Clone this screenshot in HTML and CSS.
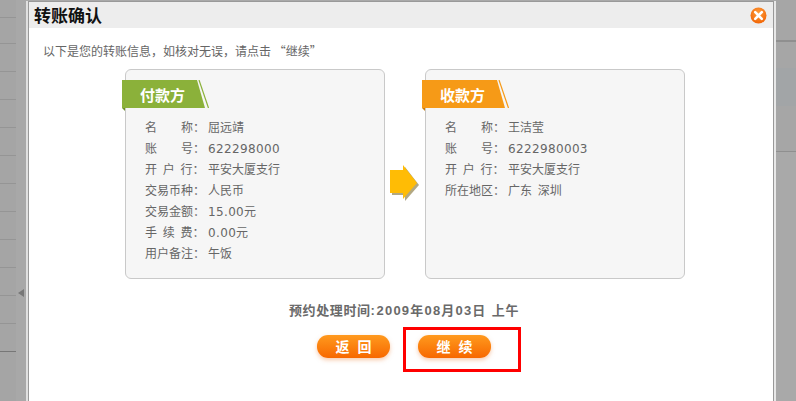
FILE: index.html
```html
<!DOCTYPE html>
<html lang="zh-CN">
<head>
<meta charset="utf-8">
<title>转账确认</title>
<link rel="stylesheet" href="styles.css">
</head>
<body>
<div class="page">
  <aside class="side-left">
    <div class="rows">
      <i class="r r1"></i><i class="r r2"></i><i class="r"></i><i class="r"></i><i class="r"></i><i class="r"></i><i class="r"></i><i class="r"></i><i class="r"></i><i class="r"></i><i class="r"></i><i class="r"></i><i class="r dark"></i>
    </div>
    <div class="strip"><span class="tri"></span></div>
  </aside>
  <main class="dialog">
    <header class="head">
      <h1>转账确认</h1>
      <svg class="close" width="17" height="17" viewBox="0 0 17 17" aria-label="关闭">
        <defs><radialGradient id="cg" cx="0.5" cy="0.35" r="0.7"><stop offset="0" stop-color="#ffa040"/><stop offset="1" stop-color="#f06000"/></radialGradient></defs>
        <circle cx="8.500" cy="8.500" r="8" fill="url(#cg)"/>
        <path d="M5.200 5.200 11.800 11.800M11.800 5.200 5.200 11.800" stroke="#fff" stroke-width="2.600" stroke-linecap="round"/>
      </svg>
    </header>
    <p class="intro">以下是您的转账信息，如核对无误，请点击 “继续”</p>
    <div class="cards">
      <section class="card">
        <div class="tag green"><span class="tag-body">付款方</span>
          <svg class="tag-tail" width="13" height="28" viewBox="0 0 13 28"><path d="M0 0 8 28H0Z" fill="currentColor"/><path d="M2 0 11.500 28" stroke="currentColor" stroke-width="1.200" fill="none"/></svg>
        </div>
        <ul class="info">
          <li><span class="k">名&emsp;&emsp;称：</span><span>屈远靖</span></li>
          <li><span class="k">账&emsp;&emsp;号：</span><span class="num">622298000</span></li>
          <li><span class="k">开 户 行：</span><span>平安大厦支行</span></li>
          <li><span class="k">交易币种：</span><span>人民币</span></li>
          <li><span class="k">交易金额：</span><span class="num">15.00元</span></li>
          <li><span class="k">手 续 费：</span><span class="num">0.00元</span></li>
          <li><span class="k">用户备注：</span><span>午饭</span></li>
        </ul>
      </section>
      <svg class="arrow" width="30" height="38" viewBox="0 0 30 38">
        <defs><filter id="as" x="-20%" y="-20%" width="150%" height="150%"><feGaussianBlur stdDeviation="0.700"/></filter></defs>
        <path d="M2 7H15V2L29 20 15 36V30H2Z" fill="#8a7a40" opacity=".65" filter="url(#as)"/>
        <path d="M0 5H13V0L27 18 13 34V28H0Z" fill="#ffbc05"/>
      </svg>
      <section class="card">
        <div class="tag orange"><span class="tag-body">收款方</span>
          <svg class="tag-tail" width="13" height="28" viewBox="0 0 13 28"><path d="M0 0 8 28H0Z" fill="currentColor"/><path d="M2 0 11.500 28" stroke="currentColor" stroke-width="1.200" fill="none"/></svg>
        </div>
        <ul class="info">
          <li><span class="k">名&emsp;&emsp;称：</span><span>王洁莹</span></li>
          <li><span class="k">账&emsp;&emsp;号：</span><span class="num">6222980003</span></li>
          <li><span class="k">开 户 行：</span><span>平安大厦支行</span></li>
          <li><span class="k">所在地区：</span><span>广东 深圳</span></li>
        </ul>
      </section>
    </div>
    <p class="time">预约处理时间:<span class="date">2009年08月03日</span> 上午</p>
    <div class="actions">
      <button class="btn" type="button">返 回</button>
      <div class="highlight"><button class="btn" type="button">继 续</button></div>
    </div>
  </main>
  <aside class="side-right">
    <i class="rb rb1"></i><i class="rb rb2"></i><i class="rb rb3"></i><i class="rb rb4"></i><i class="rb rb5"></i>
  </aside>
</div>
</body>
</html>
```

FILE: styles.css
```css
* { box-sizing: border-box; }
html, body { margin: 0; height: 100%; }
body { background: #a9a9a9; overflow: hidden; font-family: "Noto Sans CJK SC", "Liberation Sans", sans-serif; }
.page { display: flex; width: 796px; height: 401px; }
.side-left { width: 26px; height: 401px; display: flex; flex-shrink: 0; background: #a8a8a8; }
.rows { width: 16px; display: flex; flex-direction: column; background: #a5a5a5; }
.r { display: block; height: 28px; border-bottom: 1px solid #959595; flex-shrink: 0; }
.r1 { height: 18px; }
.r2 { height: 26px; }
.r.dark { border-bottom-color: #777; }
.strip { width: 10px; display: flex; align-items: flex-start; justify-content: center; padding-top: 289px; }
.tri { width: 0; height: 0; border-style: solid; border-width: 4.500px 6px 4.500px 0; border-color: transparent #777 transparent transparent; }
.dialog { width: 746px; height: 400px; flex-shrink: 0; background: #fff; border: 1px solid #999; border-bottom: 0; box-shadow: -2px 0 0 #e0e0e0, 2px 0 0 #e8e8e8; margin: 1px 0 0 2px; }
.head { height: 26px; background: #ededed; display: flex; align-items: center; justify-content: space-between; padding: 0 6px 0 5px; }
.head h1 { margin: 0; font-size: 17px; line-height: 22px; font-weight: 700; color: #111; }
.close { display: block; margin-top: 1px; }
.intro { margin: 15px 0 0 14px; font-size: 12px; line-height: 16px; color: #666; }
.cards { display: flex; align-items: flex-start; margin: 10px 0 0 96px; }
.card { width: 260px; height: 210px; background: #f6f6f6; border: 1px solid #c9c9c9; border-radius: 6px; position: relative; padding: 46px 0 0 19px; }
.arrow { margin: 96px 5px 0; flex-shrink: 0; display: block; }
.tag { position: absolute; left: -4px; top: 10px; height: 28px; display: flex; }
.tag.green { color: #8bb13a; }
.tag.orange { color: #f69a17; }
.tag-body { width: 75px; height: 28px; display: flex; align-items: center; padding-left: 18px; font-size: 15px; font-weight: 700; color: #fff; }
.green .tag-body { background: #8bb13a; }
.orange .tag-body { background: #f69a17; }
.tag-tail { display: block; }
.tag::after { content: ""; position: absolute; left: 0; top: 28px; border-left: 3px solid transparent; }
.green::after { border-top: 3px solid #6f8f2c; }
.orange::after { border-top: 3px solid #c97c10; }
.info { list-style: none; margin: 0; padding: 0; font-size: 12px; color: #666; word-spacing: 3px; }
.info li { display: flex; height: 21px; line-height: 21px; }
.k { width: 63px; flex-shrink: 0; font-family: "Noto Sans CJK TC", "Liberation Sans", sans-serif; }
.num { font-family: "DejaVu Sans", "Noto Sans CJK SC", sans-serif; letter-spacing: .35px; padding-top: 2px; }
.time { margin: 23px 0 0; padding-left: 260px; font-family: "Liberation Sans", "Noto Sans CJK SC", sans-serif; font-size: 13px; line-height: 18px; font-weight: 700; letter-spacing: .6px; word-spacing: 1px; color: #6a6a6a; white-space: nowrap; }
.date { letter-spacing: 1.200px; margin-left: 1px; }
.actions { display: flex; align-items: flex-start; margin: 15px 0 0 288px; }
.btn { width: 73px; height: 23px; border: 0; border-radius: 11px; padding: 0 0 0 2px; background: linear-gradient(#ff9a1e, #f76800); color: #fff; font-family: "Noto Sans CJK SC", "Liberation Sans", sans-serif; font-size: 14px; line-height: 23px; font-weight: 700; letter-spacing: 2px; word-spacing: 1px; box-shadow: 0 2px 4px rgba(240, 150, 90, .5); display: block; }
.highlight { width: 118px; height: 45px; border: 3px solid #f00; margin: -8px 0 0 13px; padding: 5px 0 0 12px; }
.side-right { flex: 1; background: #a9a9a9; display: flex; flex-direction: column; margin-left: 2px; }
.rb { display: block; flex-shrink: 0; background: #a6a6a6; }
.rb1 { height: 40px; }
.rb2 { height: 2px; background: #8f8f8f; }
.rb3 { height: 26px; }
.rb4 { height: 38px; background: #a2a5a7; }
.rb5 { height: 46px; border-bottom: 1px solid #8f8f8f; }
```
